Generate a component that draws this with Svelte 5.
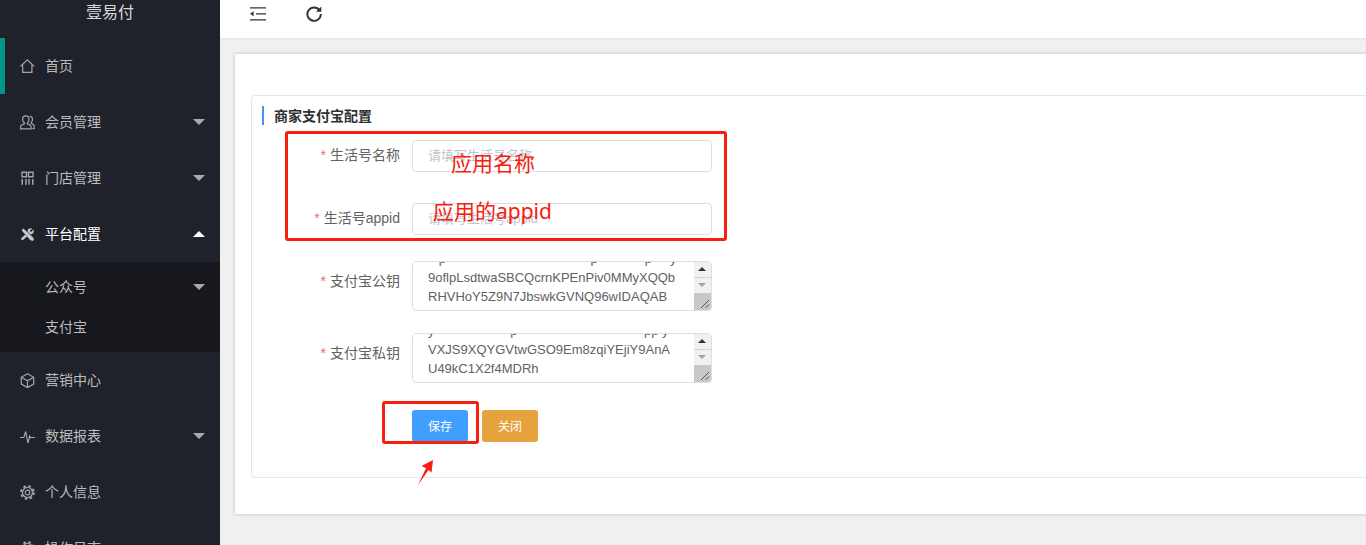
<script>
	let menu = [
		{ name: '首页', icon: 'home', current: true },
		{ name: '会员管理', icon: 'user', caret: 'down' },
		{ name: '门店管理', icon: 'store', caret: 'down' },
		{ name: '平台配置', icon: 'tools', caret: 'up', open: true },
		{ name: '营销中心', icon: 'cube' },
		{ name: '数据报表', icon: 'pulse', caret: 'down' },
		{ name: '个人信息', icon: 'gear' },
		{ name: '操作日志', icon: 'gear' }
	];

	// the line scrolled out of view only shows its descenders
	const gap = (n) => ' '.repeat(n);

	let keys = [
		{
			label: '支付宝公钥',
			value: gap(3) + 'p' + gap(40) + 'p' + gap(13) + 'p' + gap(5) + 'y\n9oflpLsdtwaSBCQcrnKPEnPiv0MMyXQQb\nRHVHoY5Z9N7JbswkGVNQ96wIDAQAB'
		},
		{
			label: '支付宝私钥',
			value: 'y' + gap(21) + 'p' + gap(35) + 'pp' + gap(1) + 'y\nVXJS9XQYGVtwGSO9Em8zqiYEjiY9AnA\nU49kC1X2f4MDRh'
		}
	];

	function toBottom(el) {
		el.scrollTop = el.scrollHeight;
	}
</script>

{#snippet icon(name)}
	<svg class="ico" viewBox="0 0 15 15" fill="none" stroke="currentColor" stroke-width="1.200">
		{#if name === 'home'}
			<path d="M.4 7.400 7.300.8l6.900 6.600M2.700 5.800v7.600h9.200V5.800" />
		{:else if name === 'user'}
			<path d="M5.700.9c2 0 3.300 1.500 3.300 3.500 0 1.500-.7 2.800-1.700 3.400v1c1.600.4 3 1 3.500 2 .3.700.3 3 .3 3H.6s0-2.200.3-3c.5-1 2-1.600 3.500-2v-1C3.400 7.200 2.600 5.900 2.600 4.400 2.600 2.400 3.800.9 5.700.9Z" />
			<path d="M9.800 1.200c1.800.3 2.700 1.700 2.700 3.200 0 1.200-.5 2.300-1.300 3v1c1.200.4 2.400 1 2.800 1.900.2.600.2 3.300.2 3.300h-1.800" />
		{:else if name === 'store'}
			<path d="M2 1.300h4.500v4.500H2zM8.500 1.300H13v4.500H8.500z" stroke-width="1.400" />
			<path d="M1.500 8H3v5.800H1.500zM5.200 8h1.500v5.800H5.200zM8.300 8h1.500v5.800H8.300zM12 8h1.500v5.800H12z" fill="currentColor" stroke="none" />
		{:else if name === 'tools'}
			<path d="M1.500 3.300 3.400 1.400l9.700 9 .9 2.400-1.400 1.300-2.400-1Z" fill="currentColor" stroke="none" />
			<path d="M13.600 2.500 11 5l-1.300-1.100L12.100 1.500C10.400.600 8.200 1.500 7.700 3.400l-.1 1.400 2.700 2.500 1.300-.1c1.700-.5 2.700-2.500 2-4.700ZM5 7.700 1.300 11.200c-.7.900.7 2.500 1.700 1.800L7 9.500Z" fill="currentColor" stroke="none" />
		{:else if name === 'cube'}
			<path d="M7.500.8 13.700 4.300v6.800L7.500 14.600 1.300 11.100V4.300ZM1.700 4.500l5.800 3.300 5.800-3.300M7.500 7.800v6.500" />
		{:else if name === 'pulse'}
			<path d="M0 8.500h3.800L5.700 2.500l2.200 11.500 1.800-7 .9 1.500H15" />
		{:else}
			<circle cx="7.500" cy="7.500" r="2.300" />
			<circle cx="7.500" cy="7.500" r="5" />
			<circle cx="7.500" cy="7.500" r="6.300" stroke-width="2.200" stroke-dasharray="2.500 2.450" />
		{/if}
	</svg>
{/snippet}

<div class="app">
	<aside class="side">
		<div class="logo">壹易付</div>
		<nav>
			{#each menu as item}
				<div class="item" class:current={item.current} class:open={item.open}>
					{@render icon(item.icon)}
					<span>{item.name}</span>
					{#if item.caret}<i class="caret {item.caret}"></i>{/if}
				</div>
				{#if item.open}
					<div class="sub">
						<div class="subitem"><span>公众号</span><i class="caret down"></i></div>
						<div class="subitem"><span>支付宝</span></div>
					</div>
				{/if}
			{/each}
		</nav>
	</aside>

	<div class="main">
		<header>
			<svg class="tool fold" viewBox="0 0 16 14" fill="none" stroke="#333" stroke-width="1.300">
				<path d="M0 .8h16M6 6.800h10M0 12.800h16" />
				<path d="M0 6.800 3.600 4.300v5Z" fill="#333" stroke="none" />
			</svg>
			<svg class="tool reload" viewBox="0 0 16 16" fill="none" stroke="#333" stroke-width="1.900">
				<path d="M13.600 4.300A6.700 6.700 0 1 0 14.800 8" />
				<path d="M15.300.6v5.200h-5.200Z" fill="#333" stroke="none" />
			</svg>
		</header>

		<section class="content">
			<div class="card">
				<div class="panel">
					<h3>商家支付宝配置</h3>
					<form>
						<div class="row first">
							<label for="name"><em>*</em>生活号名称</label>
							<input id="name" type="text" placeholder="请填写生活号名称" />
						</div>
						<div class="row second">
							<label for="appid"><em>*</em>生活号appid</label>
							<input id="appid" type="text" placeholder="请填写生活号appid" />
						</div>
						{#each keys as key, i}
							<div class="row area" class:third={i === 0} class:fourth={i === 1}>
								<label for="key{i}"><em>*</em>{key.label}</label>
								<div class="tawrap">
									<textarea id="key{i}" readonly use:toBottom value={key.value}></textarea>
									<div class="bar">
										<b class="up"></b>
										<b class="down"></b>
										<div class="grip">
											<svg viewBox="0 0 17 17" fill="none" stroke="#555">
												<path d="M7 15 15 7M11.500 15 15 11.500" />
											</svg>
										</div>
									</div>
								</div>
							</div>
						{/each}
						<div class="btns">
							<button type="button" class="save">保存</button>
							<button type="button" class="close">关闭</button>
						</div>
					</form>
				</div>
			</div>
		</section>
	</div>

	<!-- red marks drawn over the screenshot -->
	<div class="mark box1"></div>
	<div class="mark box2"></div>
	<div class="note n1">应用名称</div>
	<div class="note n2">应用的appid</div>
	<svg class="arrow" viewBox="0 0 24 30">
		<path d="M17 1 5.500 7l4.500 2.300L2 26 12.500 11l3 2.500Z" fill="#f5200f" />
	</svg>
</div>

<style>
	:global(body) {
		margin: 0;
		font-family: 'Liberation Sans', 'Noto Sans CJK SC', sans-serif;
	}

	.app {
		position: relative;
		display: flex;
		height: 545px;
		overflow: hidden;
		background: #f0f0f0;
	}

	.side {
		width: 220px;
		flex: none;
		background: #1f222a;
		color: #bcbcbe;
		font-size: 14px;
	}

	.logo {
		height: 38px;
		box-sizing: border-box;
		border-bottom: 1px solid #1b1e25;
		text-align: center;
		font-size: 16px;
		line-height: 25px;
		color: #d9d9d9;
	}

	.item {
		position: relative;
		display: flex;
		align-items: center;
		height: 56px;
		padding-left: 20px;
	}

	.item span,
	.subitem span {
		line-height: 20px;
	}

	.item.current {
		box-shadow: inset 5px 0 0 #009688;
	}

	.item.open {
		color: #fff;
	}

	.item.open .ico {
		color: #c8c8c8;
	}

	.ico {
		width: 15px;
		height: 15px;
		margin-right: 10px;
		flex: none;
		color: #a4a4a6;
	}

	.sub {
		background: #17181d;
		padding: 4px 0 5px;
	}

	.subitem {
		position: relative;
		display: flex;
		align-items: center;
		height: 41px;
		padding-left: 45px;
	}

	.subitem + .subitem {
		height: 40px;
	}

	.caret {
		position: absolute;
		right: 15px;
		top: 50%;
		margin-top: -3px;
		width: 0;
		height: 0;
		border-left: 6px solid transparent;
		border-right: 6px solid transparent;
	}

	.caret.down {
		border-top: 6px solid #a9a9a9;
	}

	.caret.up {
		border-bottom: 6px solid #fff;
	}

	.main {
		flex: 1;
		min-width: 0;
	}

	header {
		display: flex;
		align-items: center;
		height: 38px;
		padding-bottom: 10px;
		box-sizing: border-box;
		background: #fff;
		box-shadow: 0 1px 2px rgba(0, 0, 0, 0.06);
	}

	.tool {
		flex: none;
	}

	.fold {
		width: 16px;
		height: 14px;
		margin-left: 30px;
	}

	.reload {
		width: 16px;
		height: 16px;
		margin-left: 40px;
	}

	.content {
		padding: 16px 0 0 15px;
	}

	.card {
		width: 1200px;
		height: 460px;
		padding: 41px 0 0 16px;
		box-sizing: border-box;
		background: #fff;
		box-shadow: 0 0 3px rgba(60, 80, 100, 0.35);
	}

	.panel {
		height: 383px;
		box-sizing: border-box;
		border: 1px solid #dfe8f3;
		border-radius: 4px;
		padding: 10px 0 0 10px;
	}

	h3 {
		margin: 0;
		height: 19px;
		padding-left: 10px;
		border-left: 2px solid #4a90f0;
		font-size: 14px;
		line-height: 20px;
		font-weight: 700;
		color: #303133;
	}

	.row {
		display: flex;
		align-items: flex-start;
	}

	.row.first {
		margin-top: 15px;
	}

	.row.second {
		margin-top: 31px;
	}

	.row.third {
		margin-top: 26px;
	}

	.row.fourth {
		margin-top: 22px;
	}

	label {
		width: 138px;
		margin-right: 12px;
		flex: none;
		text-align: right;
		font-size: 14px;
		line-height: 30px;
		color: #606266;
	}

	.area label {
		line-height: 40px;
	}

	em {
		font-style: normal;
		color: #f56c6c;
		margin-right: 4px;
	}

	input {
		width: 300px;
		height: 32px;
		box-sizing: border-box;
		padding: 0 15px 2px;
		border: 1px solid #dcdfe6;
		border-radius: 4px;
		outline: none;
		font: inherit;
		font-size: 13px;
		color: #606266;
	}

	input::placeholder {
		color: #c0c4cc;
	}

	.tawrap {
		position: relative;
		width: 300px;
		height: 50px;
	}

	textarea {
		display: block;
		width: 100%;
		height: 100%;
		box-sizing: border-box;
		padding: 5px 15px 4px 15px;
		border: 1px solid #dcdfe6;
		border-radius: 4px;
		outline: none;
		resize: none;
		overflow: hidden;
		white-space: pre;
		font: inherit;
		font-size: 13px;
		line-height: 19px;
		color: #606266;
	}

	.bar {
		position: absolute;
		top: 1px;
		right: 1px;
		bottom: 1px;
		width: 17px;
		display: flex;
		flex-direction: column;
		background: #f1f1f1;
		border-radius: 0 3px 3px 0;
		overflow: hidden;
	}

	.bar b {
		height: 15px;
		flex: none;
		position: relative;
	}

	.bar .up {
		border-bottom: 1px solid #d4d4d4;
	}

	.bar b::after {
		content: '';
		position: absolute;
		left: 4px;
		top: 5px;
		border-left: 4px solid transparent;
		border-right: 4px solid transparent;
	}

	.bar .up::after {
		border-bottom: 4px solid #333;
	}

	.bar .down::after {
		border-top: 4px solid #a3a3a3;
	}

	.grip {
		flex: 1;
		background: #c8c8c8;
	}

	.grip svg {
		display: block;
		width: 17px;
		height: 17px;
	}

	.btns {
		display: flex;
		gap: 14px;
		margin: 27px 0 0 150px;
	}

	button {
		width: 56px;
		height: 32px;
		padding: 0 0 2px;
		border: 0;
		border-radius: 3px;
		font: inherit;
		font-size: 12px;
		color: #fff;
	}

	.save {
		background: #409eff;
	}

	.close {
		background: #e6a23c;
	}

	.mark {
		position: absolute;
		box-sizing: border-box;
		border: 3px solid #f5200f;
		border-radius: 3px;
	}

	.box1 {
		left: 285px;
		top: 131px;
		width: 442px;
		height: 110px;
	}

	.box2 {
		left: 382px;
		top: 401px;
		width: 97px;
		height: 43px;
	}

	.note {
		position: absolute;
		font-family: 'Noto Sans', 'Noto Sans CJK SC', sans-serif;
		font-size: 21px;
		line-height: 28px;
		color: #f5200f;
		white-space: nowrap;
	}

	.n1 {
		left: 451px;
		top: 149px;
	}

	.n2 {
		left: 433px;
		top: 197px;
	}

	.arrow {
		position: absolute;
		left: 416px;
		top: 459px;
		width: 24px;
		height: 30px;
	}
</style>
